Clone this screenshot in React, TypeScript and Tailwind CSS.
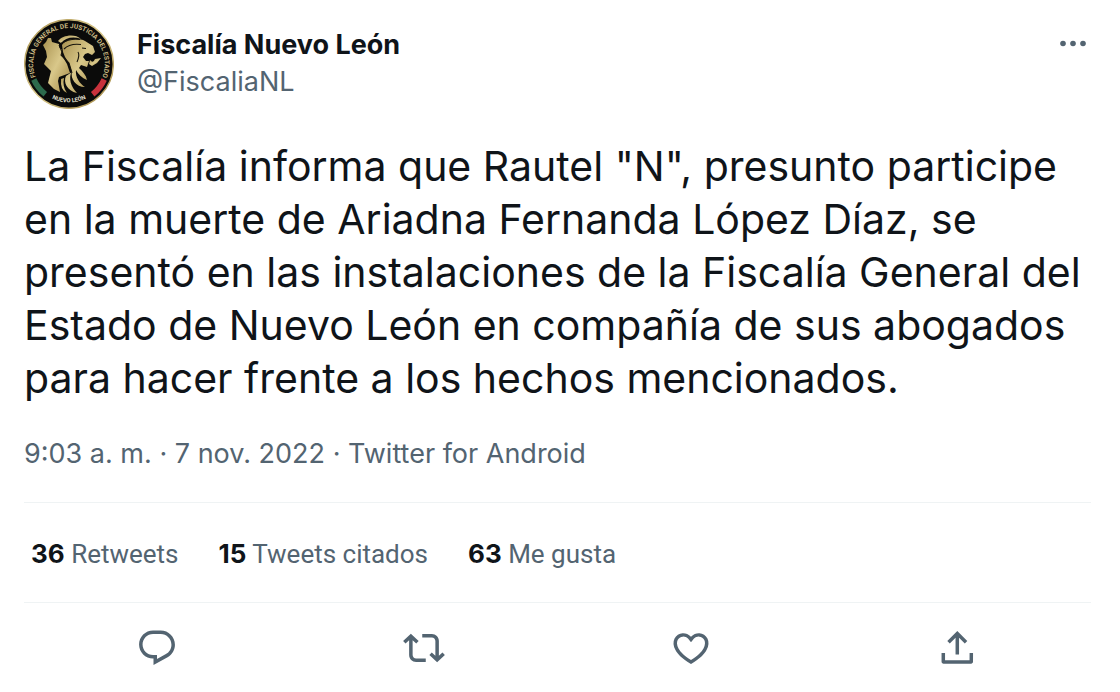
const actions = [
  {
    label: 'Responder',
    d: 'M1.751 10c0-4.42 3.584-8 8.005-8h4.366c4.49 0 8.129 3.64 8.129 8.13 0 2.96-1.607 5.68-4.196 7.11l-8.054 4.46v-3.69h-.067c-4.49.1-8.183-3.51-8.183-8.01zm8.005-6c-3.317 0-6.005 2.69-6.005 6 0 3.37 2.77 6.08 6.138 6.01l.351-.01h1.761v2.3l5.087-2.81c1.951-1.08 3.163-3.13 3.163-5.36 0-3.39-2.744-6.13-6.129-6.13H9.756z',
  },
  {
    label: 'Retwittear',
    d: 'M4.5 3.88l4.432 4.14-1.364 1.46L5.5 7.55V16c0 1.1.896 2 2 2H13v2H7.5c-2.209 0-4-1.79-4-4V7.55L1.432 9.48.068 8.02 4.5 3.88zM16.5 6H11V4h5.5c2.209 0 4 1.79 4 4v8.45l2.068-1.93 1.364 1.46-4.432 4.14-4.432-4.14 1.364-1.46 2.068 1.93V8c0-1.1-.896-2-2-2z',
  },
  {
    label: 'Me gusta',
    d: 'M16.697 5.5c-1.222-.06-2.679.51-3.89 2.16l-.805 1.09-.806-1.09C9.984 6.01 8.526 5.44 7.304 5.5c-1.243.07-2.349.78-2.91 1.91-.552 1.12-.633 2.78.479 4.82 1.074 1.97 3.257 4.27 7.129 6.61 3.87-2.34 6.052-4.64 7.126-6.61 1.111-2.04 1.03-3.7.477-4.82-.561-1.13-1.666-1.84-2.908-1.91zm4.187 7.69c-1.351 2.48-4.001 5.12-8.379 7.67l-.503.3-.504-.3c-4.379-2.55-7.029-5.19-8.382-7.67-1.36-2.5-1.41-4.86-.514-6.67.887-1.79 2.647-2.91 4.601-3.01 1.651-.09 3.368.56 4.798 2.01 1.429-1.45 3.146-2.1 4.796-2.01 1.954.1 3.714 1.22 4.601 3.01.896 1.81.846 4.17-.514 6.67z',
  },
  {
    label: 'Compartir',
    d: 'M11.6 2.3l5.7 5.7-1.41 1.42L12.6 6.11V15.7h-2V6.11l-3.3 3.3L5.89 8l5.71-5.7zM20.6 14.8l-.02 5.1c0 .6-.5 1.1-1.1 1.1H3.7c-.6 0-1.1-.5-1.1-1.1v-5.1h2V19h14l.02-4.2h1.98z',
  },
];

const stats = [
  { count: 36, label: 'Retweets' },
  { count: 15, label: 'Tweets citados' },
  { count: 63, label: 'Me gusta' },
];

function Avatar() {
  return (
    <svg viewBox="0 0 90 90" className="size-[90px] shrink-0" role="img" aria-label="Fiscalía General de Justicia del Estado, Nuevo León">
      <defs>
        <linearGradient id="gold" x1="0" y1="0" x2="1" y2="1">
          <stop offset="0" stopColor="#a8914f" />
          <stop offset="0.5" stopColor="#d9c88a" />
          <stop offset="1" stopColor="#a18643" />
        </linearGradient>
        <path id="ring" d="M13.1 61.2A35.8 35.8 0 1 1 76.9 61.2" />
        <path id="base" d="M20 74.4A39.2 39.2 0 0 0 70 74.4" />
      </defs>
      <circle cx="45" cy="45" r="44.3" fill="#0b0b0a" stroke="url(#gold)" strokeWidth="1.5" />
      <path d="M9.8 60.5A38.4 38.4 0 0 0 21.3 75.2" fill="none" stroke="#2d6a4c" strokeWidth="5.6" />
      <path d="M80.2 60.5A38.4 38.4 0 0 1 68.7 75.2" fill="none" stroke="#c9323c" strokeWidth="5.6" />
      <text fill="#c9b983" fontSize="6.6" fontWeight="700" fontFamily="Roboto, sans-serif" textAnchor="middle">
        <textPath href="#ring" startOffset="50%">FISCALÍA GENERAL DE JUSTICIA DEL ESTADO</textPath>
      </text>
      <text fill="#e4e0d2" fontSize="5.8" fontWeight="700" fontFamily="Roboto, sans-serif" textAnchor="middle">
        <textPath href="#base" startOffset="50%">NUEVO LEÓN</textPath>
      </text>
      <g fill="url(#gold)">
        <path d="M19 26L22 23L24 19L27 19L28 23L35 25L35 28L38 31L37 35L40 40L43 45L46 54L35 58L34 62L36 73L30 70L24 64L27 52L20 45L23 38L22 32Z" />
        <path d="M34 22C38 16 51 14 57 20C49 17 41 19 37 24Z" />
        <path d="M38 26C43 19 55 19 61 22L69 27L71 33L68 36L64 34L61 35L59 38L62 42L65 42L63 48L57 46L55 49C59 53 62 56 63 61C58 59 54 55 52 51C51 58 56 65 61 68C52 68 46 60 48 52C44 59 47 68 53 74C43 72 39 63 42 57L48 53L45 44L41 38L39 33Z" />
        <path d="M37 60L40 59Q38 67 43 74Q36 71 37 60Z" />
        <path d="M66 41Q69 45 71 40L77 39L73 44L68 47L65 45Z" />
      </g>
      <path d="M37 24.5Q46 19 56 20.5M40 30Q46 24 57 25.5M58 29L62 29.5M35 26L38 33L37 36L45 44L48 54M54 33Q56 36 53 43" fill="none" stroke="#18150c" strokeWidth="1.1" />
    </svg>
  );
}

export default function App() {
  return (
    <article className="min-h-screen bg-white px-6 pt-[19px] font-['Inter',sans-serif] text-[#0f1419]">
      <header className="flex items-start">
        <Avatar />
        <div className="ml-[23px] flex-1 pt-[7px] text-[27px] leading-[37px]">
          <h1 className="font-bold">Fiscalía Nuevo León</h1>
          <a href="#perfil" className="text-[#536471]">@FiscaliaNL</a>
        </div>
        <button type="button" aria-label="Más opciones" className="mt-1 mr-1 text-[#536471]">
          <svg viewBox="0 0 40 40" className="size-10" fill="currentColor">
            <circle cx="11" cy="20.5" r="2.8" />
            <circle cx="21" cy="20.5" r="2.8" />
            <circle cx="31" cy="20.5" r="2.8" />
          </svg>
        </button>
      </header>

      <p className="mt-[31px] text-[41px] leading-[53px]">
        La Fiscalía informa que Rautel "N", presunto participe
        <br />
        en la muerte de Ariadna Fernanda López Díaz, se
        <br />
        presentó en las instalaciones de la Fiscalía General del
        <br />
        Estado de Nuevo León en compañía de sus abogados
        <br />
        para hacer frente a los hechos mencionados.
      </p>

      <div className="mt-[31px] text-[27px] leading-[36px] text-[#536471]">
        <a href="#fecha">9:03 a. m. · 7 nov. 2022</a> · <a href="#fuente">Twitter for Android</a>
      </div>

      <div className="mt-[30px] mr-[5px] flex gap-10 border-y border-[#eff3f4] px-[7px] pt-[33px] pb-[30px] font-['Roboto',sans-serif] text-[26px] leading-[36px]">
        {stats.map((s) => (
          <a key={s.label} href="#detalle" className="text-[#536471]">
            <span className="font-['Inter',sans-serif] font-bold text-[#0f1419]">{s.count}</span> {s.label}
          </a>
        ))}
      </div>

      <div className="mr-[5px] flex pt-6">
        {actions.map((a) => (
          <div key={a.label} className="flex flex-1 justify-center">
            <button type="button" aria-label={a.label} className="text-[#536471]">
              <svg viewBox="0 0 24 24" className="size-[42px]" fill="currentColor">
                <path d={a.d} />
              </svg>
            </button>
          </div>
        ))}
      </div>
    </article>
  );
}
